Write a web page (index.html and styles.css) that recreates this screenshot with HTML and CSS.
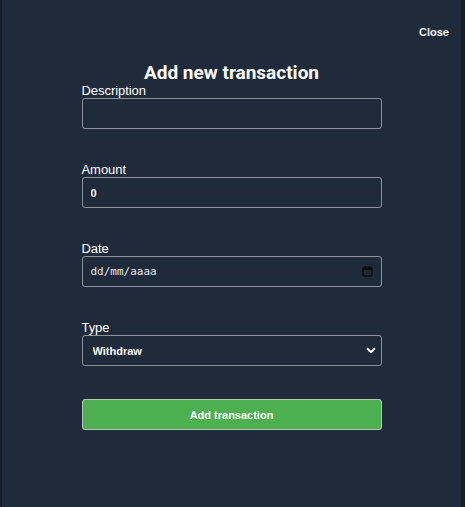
FILE: index.html
```html
<!DOCTYPE html>
<html lang="pt">
<head>
<meta charset="utf-8">
<title>Add new transaction</title>
<link rel="stylesheet" href="styles.css">
</head>
<body>
<div class="modal">
  <div class="modal-header">
    <button class="close-btn" type="button">Close</button>
  </div>
  <form class="form">
    <h2 class="title">Add new transaction</h2>
    <div class="field">
      <label class="label" for="desc">Description</label>
      <input class="input" id="desc" type="text">
    </div>
    <div class="field">
      <label class="label" for="amount">Amount</label>
      <input class="input input-amount" id="amount" type="text" value="0">
    </div>
    <div class="field">
      <label class="label">Date</label>
      <div class="input date-input">
        <span class="date-text">dd/mm/aaaa</span>
        <svg class="cal-icon" width="11" height="11" viewBox="0 0 11 11" aria-hidden="true">
          <rect x="1" y="1.5" width="9" height="8.5" rx="1" fill="none" stroke="#0b0f14" stroke-width="1.4"/>
          <rect x="1" y="1.5" width="9" height="2.6" fill="#0b0f14"/>
          <rect x="3" y="0" width="1.3" height="2" fill="#0b0f14"/>
          <rect x="6.7" y="0" width="1.3" height="2" fill="#0b0f14"/>
        </svg>
      </div>
    </div>
    <div class="field">
      <label class="label" for="type">Type</label>
      <select class="input select" id="type">
        <option>Withdraw</option>
        <option>Deposit</option>
      </select>
    </div>
    <button class="submit" type="button">Add transaction</button>
  </form>
</div>
</body>
</html>
```
FILE: styles.css
```css
html, body {
  margin: 0;
  padding: 0;
  height: 100%;
}
body {
  background: #161e28;
  font-family: "Liberation Sans", Arial, sans-serif;
  color: #ffffff;
}
.modal {
  box-sizing: border-box;
  height: 100%;
  margin: 0 4px 0 2px;
  background: #1f2b3a;
  display: flex;
  flex-direction: column;
  align-items: center;
}
.modal-header {
  align-self: stretch;
  display: flex;
  justify-content: flex-end;
  padding: 25px 12px 0 0;
}
.close-btn {
  background: transparent;
  border: none;
  color: #ffffff;
  font-family: "Liberation Sans", Arial, sans-serif;
  font-weight: bold;
  font-size: 11px;
  padding: 0;
  line-height: 14px;
  cursor: pointer;
}
.form {
  width: 300px;
  display: flex;
  flex-direction: column;
}
.title {
  margin: 22px 0 0 0;
  font-family: Roboto, "Liberation Sans", Arial, sans-serif;
  font-weight: bold;
  font-size: 19px;
  line-height: 23px;
  text-align: center;
}
.field {
  display: flex;
  flex-direction: column;
  margin-bottom: 34px;
}
.label {
  font-size: 13px;
  line-height: 14px;
  letter-spacing: -0.05px;
}
.input {
  box-sizing: border-box;
  height: 31px;
  width: 100%;
  background: transparent;
  border: 1.5px solid #8c939b;
  border-radius: 3px;
  color: #ffffff;
  font-family: "Liberation Sans", Arial, sans-serif;
  font-size: 11px;
  padding: 0 8px;
  outline: none;
}
.input-amount {
  font-weight: bold;
}
.date-input {
  display: flex;
  align-items: center;
  justify-content: space-between;
  padding: 0 8px 0 8px;
}
.date-text {
  font-family: "DejaVu Sans Mono", "Liberation Mono", monospace;
  font-size: 11px;
  color: #e6e8ea;
}
.cal-icon {
  display: block;
}
.select {
  appearance: none;
  -webkit-appearance: none;
  font-weight: bold;
  padding: 0 10px;
  background-image: url("data:image/svg+xml;utf8,<svg xmlns='http://www.w3.org/2000/svg' width='10' height='7' viewBox='0 0 10 7'><path d='M1 1.2 L5 5.2 L9 1.2' fill='none' stroke='white' stroke-width='2'/></svg>");
  background-repeat: no-repeat;
  background-position: right 5px center;
  background-size: 10px 7px;
}
.select option {
  background: #1f2b3a;
}
.submit {
  box-sizing: border-box;
  height: 31px;
  width: 100%;
  margin-top: -1px;
  background: #4caf50;
  border: 1px solid #b7c4b8;
  border-radius: 3px;
  color: #ffffff;
  font-family: "Liberation Sans", Arial, sans-serif;
  font-weight: bold;
  font-size: 11px;
  cursor: pointer;
}
```
